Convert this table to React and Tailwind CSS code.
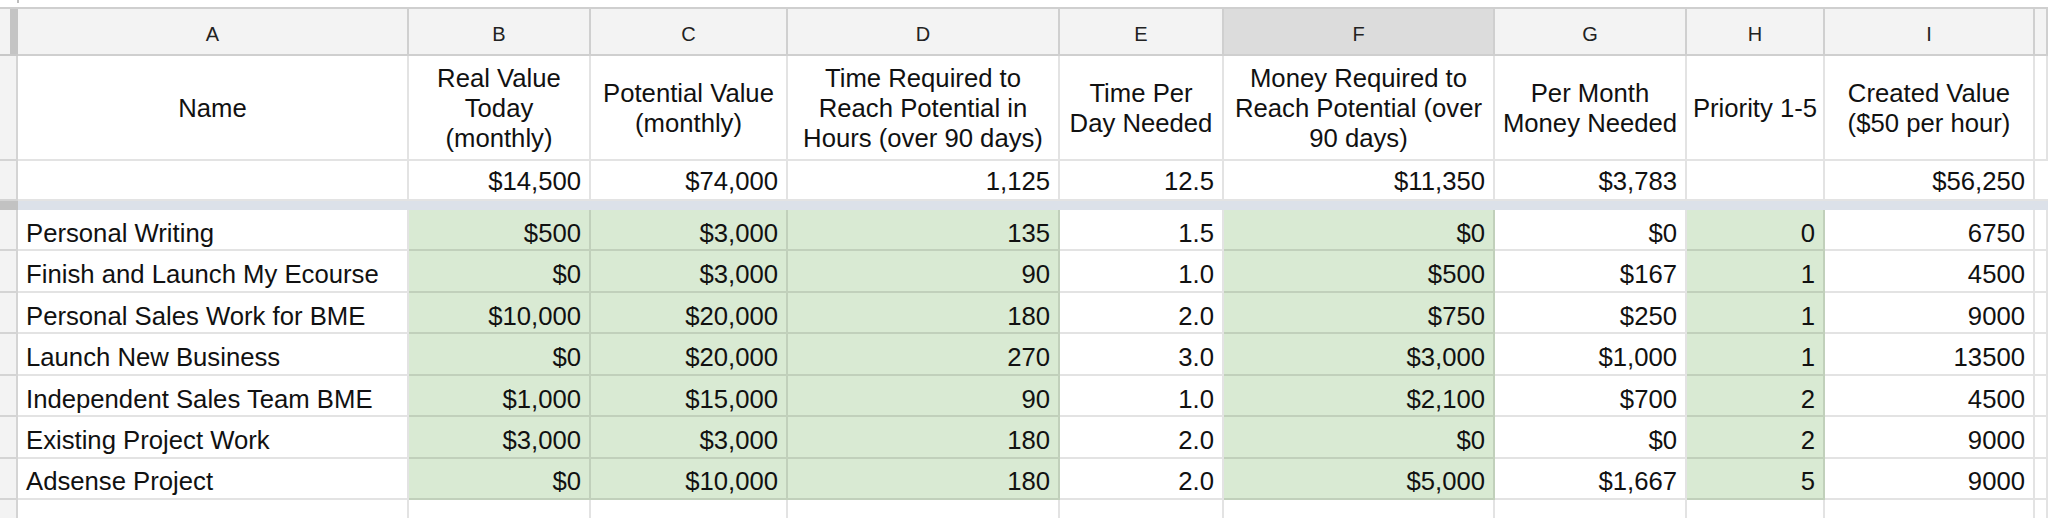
import React from "react";

const colLetters = ["A", "B", "C", "D", "E", "F", "G", "H", "I", ""];

const headerLines = [
  ["Name"],
  ["Real Value", "Today", "(monthly)"],
  ["Potential Value", "(monthly)"],
  ["Time Required to", "Reach Potential in", "Hours (over 90 days)"],
  ["Time Per", "Day Needed"],
  ["Money Required to", "Reach Potential (over", "90 days)"],
  ["Per Month", "Money Needed"],
  ["Priority 1-5"],
  ["Created Value", "($50 per hour)"],
  [],
];

const totals = ["", "$14,500", "$74,000", "1,125", "12.5", "$11,350", "$3,783", "", "$56,250", ""];

const rows = [
  ["Personal Writing", "$500", "$3,000", "135", "1.5", "$0", "$0", "0", "6750"],
  ["Finish and Launch My Ecourse", "$0", "$3,000", "90", "1.0", "$500", "$167", "1", "4500"],
  ["Personal Sales Work for BME", "$10,000", "$20,000", "180", "2.0", "$750", "$250", "1", "9000"],
  ["Launch New Business", "$0", "$20,000", "270", "3.0", "$3,000", "$1,000", "1", "13500"],
  ["Independent Sales Team BME", "$1,000", "$15,000", "90", "1.0", "$2,100", "$700", "2", "4500"],
  ["Existing Project Work", "$3,000", "$3,000", "180", "2.0", "$0", "$0", "2", "9000"],
  ["Adsense Project", "$0", "$10,000", "180", "2.0", "$5,000", "$1,667", "5", "9000"],
];

const green = [false, true, true, true, false, true, false, true, false, false];

const cellBase = "border-r-2 border-b-2 border-black/[0.11] flex items-center overflow-hidden whitespace-nowrap";

function RowHead({ className = "" }) {
  return <div className={"bg-[#f3f3f3] border-r-2 border-b-2 border-[#d4d4d4] " + className} />;
}

export default function App() {
  return (
    <div
      className="w-[2048px] h-[518px] overflow-hidden bg-white text-[#111]"
      style={{ fontFamily: '"Liberation Sans", Arial, Helvetica, sans-serif' }}
    >
      {/* top strip */}
      <div className="h-[9px] border-b-2 border-[#cfcfcf] relative">
        <div className="absolute left-[17px] top-0 w-[2px] h-[3px] bg-[#bdbdbd]" />
      </div>
      <div className="grid grid-cols-[18px_391px_182px_197px_272px_164px_271px_192px_138px_210px_13px] grid-rows-[47px_105px_40px_9px_repeat(7,41.43px)_20px]">
        {/* column header row */}
        <div className="bg-[#f3f3f3] border-b-2 border-[#c8c8c8] flex justify-end">
          <div className="w-[8px] h-full bg-[#c4c4c4]" />
        </div>
        {colLetters.map((l, i) => (
          <div
            key={"h" + i}
            className={
              "border-r-2 border-b-2 border-[#cfcfcf] flex items-center justify-center pt-[5px] text-[20px] text-[#222] " +
              (i === 5 ? "bg-[#dcdcdc]" : "bg-[#f3f3f3]")
            }
          >
            {l}
          </div>
        ))}

        {/* header text row */}
        <RowHead />
        {headerLines.map((lines, i) => (
          <div
            key={"t" + i}
            className={cellBase + " justify-center text-center text-[25.7px] leading-[30px]"}
          >
            <div>
              {lines.map((ln, j) => (
                <div key={j}>{ln}</div>
              ))}
            </div>
          </div>
        ))}

        {/* totals row */}
        <RowHead />
        {totals.map((v, i) => (
          <div key={"s" + i} className={cellBase + " justify-end px-[8px] pt-[3px] text-[25.7px]"}>
            {v}
          </div>
        ))}

        {/* frozen divider */}
        <div className="bg-[#c2c2c2]" />
        <div className="col-span-10 bg-[#dce1e9]" />

        {/* data rows */}
        {rows.map((r, ri) => (
          <React.Fragment key={"r" + ri}>
            <RowHead />
            {r.map((v, i) => (
              <div
                key={i}
                className={
                  cellBase +
                  " px-[8px] pt-[7px] text-[25.7px] " +
                  (i === 0 ? "justify-start " : "justify-end ") +
                  (green[i] ? "bg-[#d9ead3]" : "bg-white")
                }
              >
                {v}
              </div>
            ))}
            <div className={cellBase + " bg-white"} />
          </React.Fragment>
        ))}

        {/* last partial row */}
        <RowHead />
        {colLetters.map((_, i) => (
          <div key={"e" + i} className={cellBase + " bg-white"} />
        ))}
      </div>
    </div>
  );
}
